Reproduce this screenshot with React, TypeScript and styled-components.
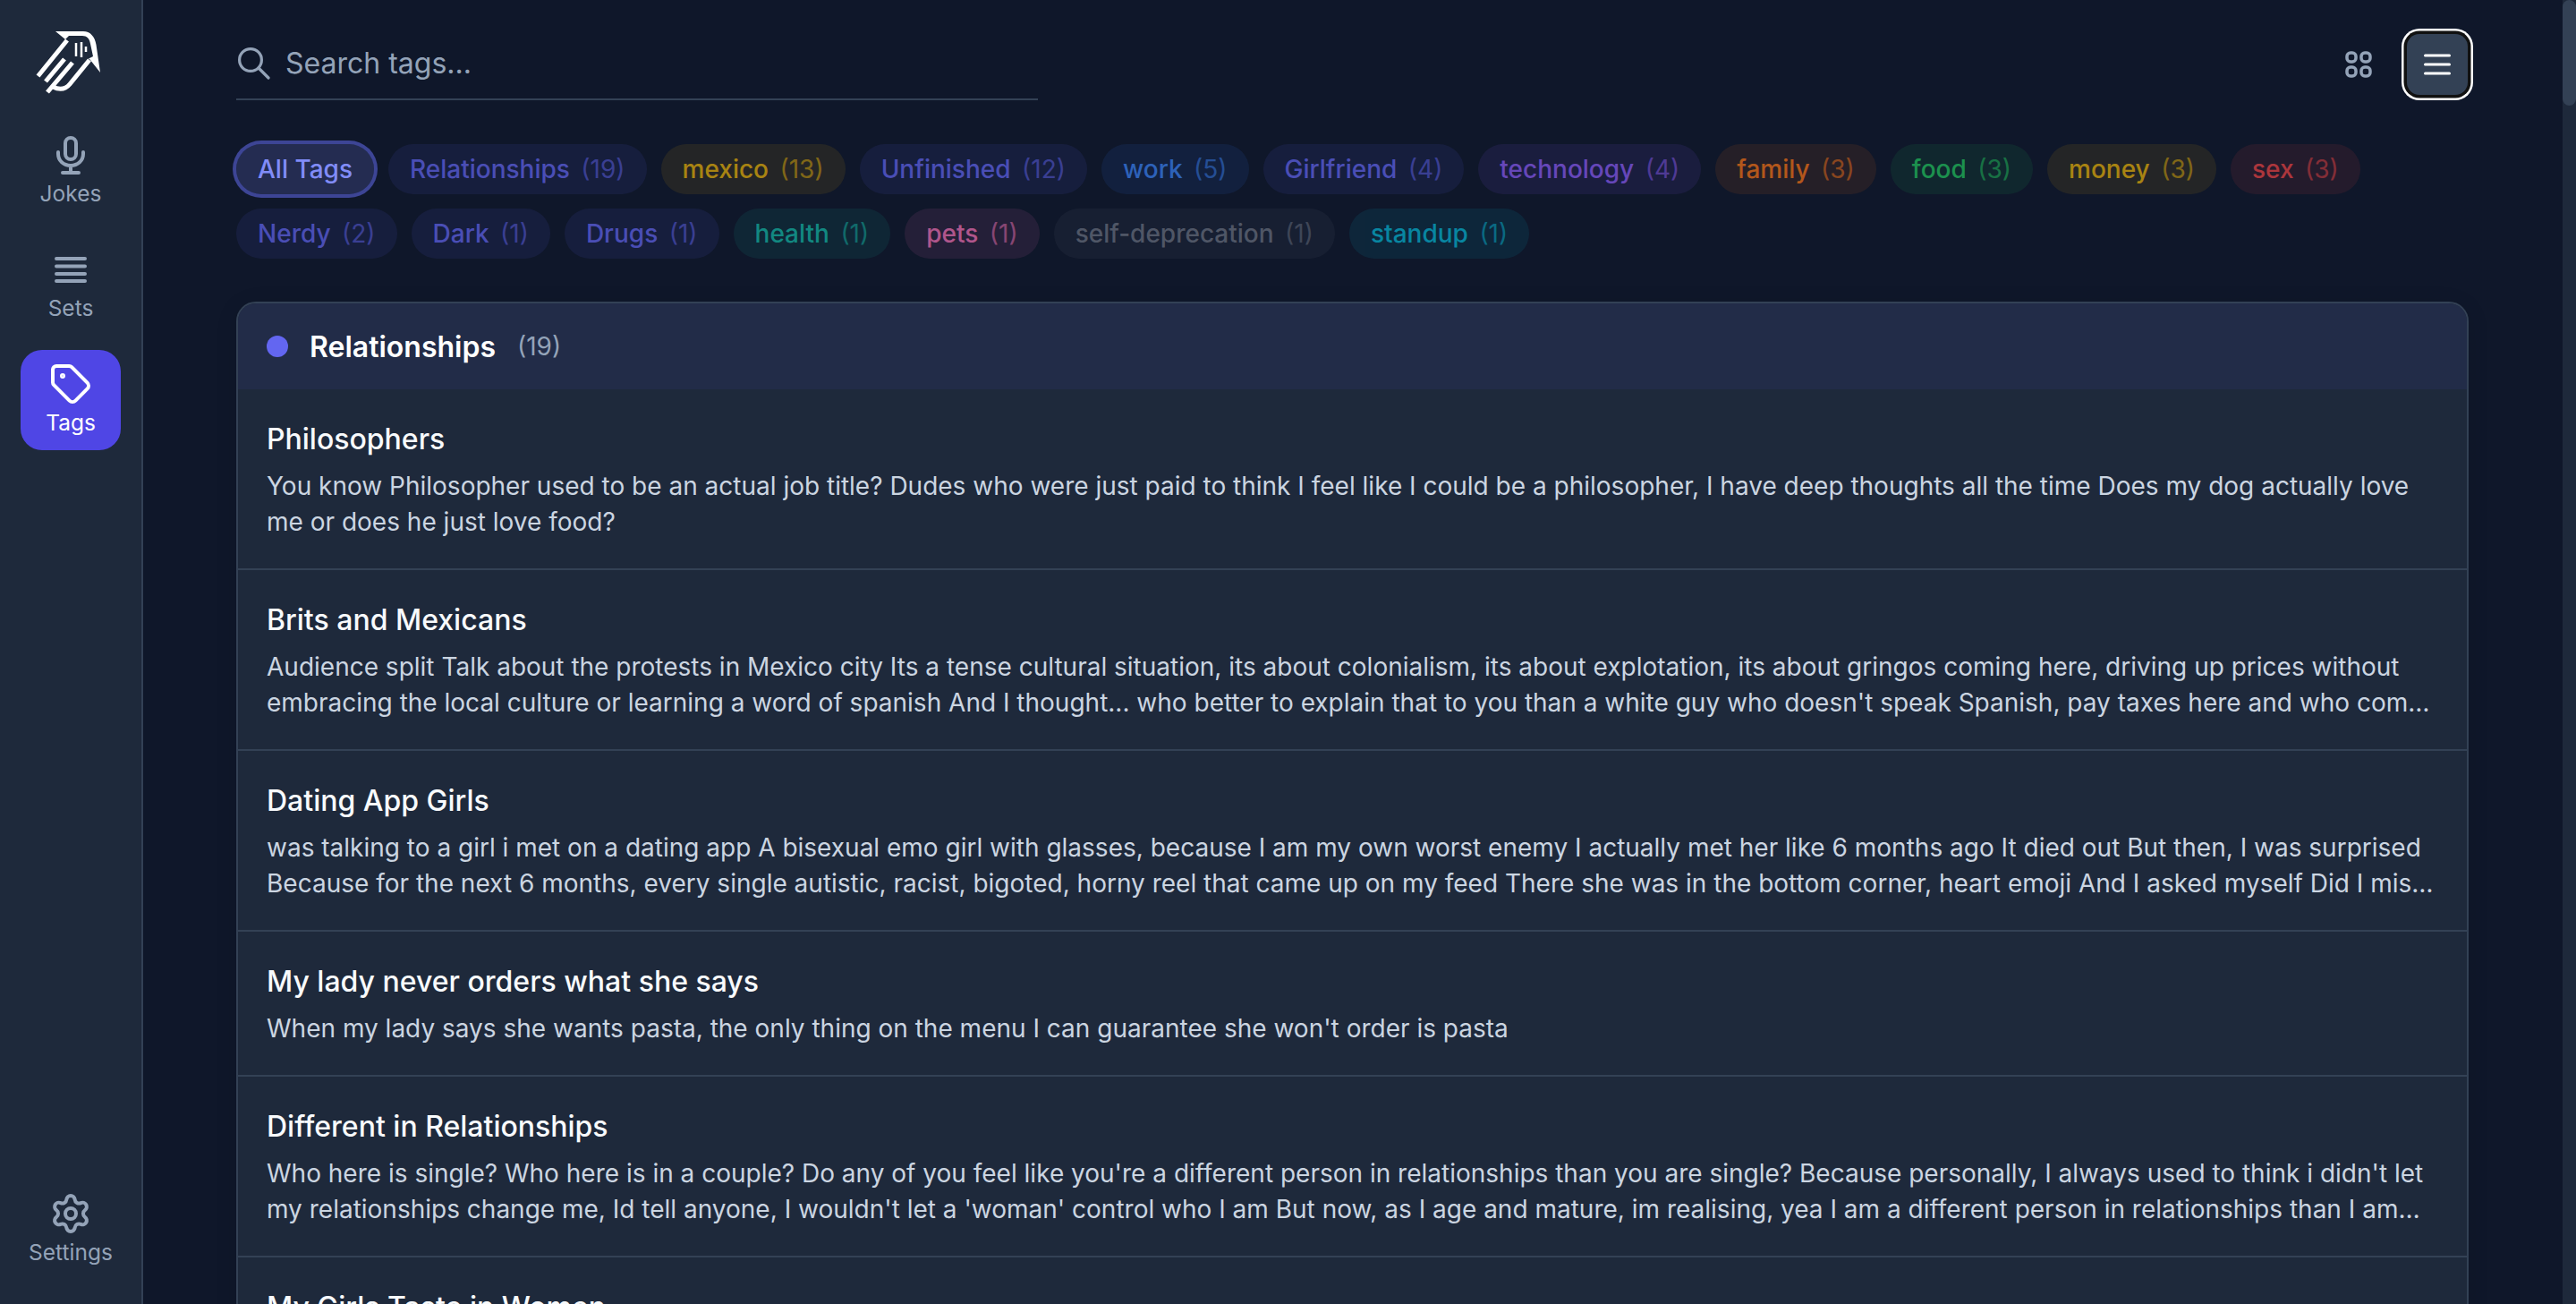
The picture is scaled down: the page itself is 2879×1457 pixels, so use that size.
import styled, { createGlobalStyle } from "styled-components";
import { Settings, Tag } from "lucide-react";

const GlobalStyle = createGlobalStyle`
  * {
    box-sizing: border-box;
  }
  html,
  body {
    margin: 0;
    height: 100%;
    overflow: hidden;
    background: #0f172a;
    font-family: "Inter", "Liberation Sans", sans-serif;
  }
`;

const Shell = styled.div`
  display: flex;
  height: 100vh;
  overflow: hidden;
`;

const Sidebar = styled.aside`
  flex: 0 0 160px;
  display: flex;
  flex-direction: column;
  align-items: center;
  padding: 33px 0 27px;
  background: #1e293b;
  border-right: 2px solid #334155;
`;

const LogoWrap = styled.div`
  width: 80px;
  height: 80px;
  margin-bottom: 22px;
`;

const NavList = styled.nav`
  display: flex;
  flex-direction: column;
  gap: 16px;
  flex: 1;
`;

const NavItem = styled.div<{ $active?: boolean }>`
  width: 112px;
  height: 112px;
  padding-top: 16px;
  display: flex;
  flex-direction: column;
  align-items: center;
  gap: 3px;
  border-radius: 24px;
  background: ${(p) => (p.$active ? "#4f46e5" : "transparent")};
  color: ${(p) => (p.$active ? "#ffffff" : "#94a3b8")};
`;

const NavIcon = styled.div`
  height: 44px;
  display: flex;
  align-items: center;
  justify-content: center;
`;

const NavLabel = styled.span`
  font-size: 24.5px;
  line-height: 36px;
`;

const Main = styled.main`
  flex: 1;
  min-width: 0;
  padding: 32px 105px 0 104px;
  overflow: hidden;
`;

const Toolbar = styled.div`
  display: flex;
  align-items: center;
  justify-content: space-between;
  margin-bottom: 49px;
`;

const SearchBox = styled.div`
  width: 896px;
  height: 80px;
  display: flex;
  align-items: center;
  gap: 17px;
  padding: 7px 0 7px 2px;
  border-bottom: 2px solid #334155;
  color: #94a3b8;
`;

const SearchText = styled.span`
  font-size: 32px;
  line-height: 44px;
`;

const ViewButtons = styled.div`
  display: flex;
  gap: 20px;
  margin-right: 1px;
`;

const ViewButton = styled.div<{ $focused?: boolean }>`
  width: 68px;
  height: 68px;
  display: flex;
  align-items: center;
  justify-content: center;
  border-radius: 14px;
  color: ${(p) => (p.$focused ? "#ffffff" : "#94a3b8")};
  background: ${(p) => (p.$focused ? "#334155" : "transparent")};
  box-shadow: ${(p) =>
    p.$focused ? "0 0 0 3.5px #111111, 0 0 0 6px #ffffff" : "none"};
`;

const ChipWrap = styled.div`
  display: flex;
  flex-wrap: wrap;
  gap: 16px;
  margin-bottom: 48px;
`;

const Chip = styled.div<{ $color: string; $active?: boolean }>`
  height: 56px;
  padding: 0 24px;
  display: flex;
  align-items: center;
  gap: 12.5px;
  border-radius: 28px;
  font-size: 28px;
  font-weight: 500;
  color: ${(p) => p.$color};
  opacity: ${(p) => (p.$active ? 1 : 0.7)};
  background: ${(p) => (p.$active ? `${p.$color}30` : `${p.$color}24`)};
  box-shadow: ${(p) => (p.$active ? "0 0 0 4px #3d4595" : "none")};
`;

const ChipCount = styled.span`
  font-weight: 400;
  opacity: 0.7;
`;

const Card = styled.section`
  border: 2px solid #334155;
  border-radius: 22px;
  background: #1e293b;
  overflow: hidden;
  box-shadow: 0 4px 24px rgba(0, 0, 0, 0.1);
`;

const CardHeader = styled.header`
  height: 96px;
  padding: 0 32px;
  display: flex;
  align-items: center;
  background: #222c48;
`;

const Dot = styled.span`
  width: 24px;
  height: 24px;
  border-radius: 50%;
  background: #6366f1;
  margin-right: 24px;
`;

const CardTitle = styled.h2`
  margin: 0 24px 0 0;
  font-size: 32px;
  font-weight: 600;
  color: #ffffff;
`;

const CardCount = styled.span`
  font-size: 28px;
  color: #94a3b8;
`;

const Row = styled.article`
  padding: 33px 32px 32px;
  border-bottom: 2px solid #334155;
`;

const RowTitle = styled.h3`
  margin: 0 0 9px;
  font-size: 32px;
  line-height: 46px;
  font-weight: 500;
  color: #f8fafc;
`;

const RowBody = styled.p`
  margin: 0;
  font-size: 28px;
  line-height: 40px;
  color: #cbd5e1;
  display: -webkit-box;
  -webkit-line-clamp: 2;
  -webkit-box-orient: vertical;
  overflow: hidden;
`;

const ScrollTrack = styled.div`
  flex: 0 0 15px;
  background: #1e293b;
`;

const ScrollThumb = styled.div`
  height: 118px;
  border-radius: 8px;
  background: #334155;
`;

const Logo = () => (
  <svg width="80" height="80" viewBox="40 33 80 80" fill="none">
    <path
      d="M63 35H94C102 35 107 41 108.500 50L113 81L101.500 66.500L100 65.500L105 63L102 49C101 43 98 40 93 40H78L74 44Z"
      fill="#fff"
    />
    <path
      d="M43.500 85L76 45M52 91L73 66M54 103L82 70M101 67L79 94C74 100 68 101 60 97"
      stroke="#fff"
      strokeWidth="5"
    />
    <path d="M86 48V63M92 47V64M97 52V58" stroke="#fff" strokeWidth="2.500" />
  </svg>
);

const MicIcon = () => (
  <svg width="34" height="44" viewBox="0 0 34 44" fill="none" stroke="#94a3b8" strokeWidth="4" strokeLinecap="round">
    <rect x="11" y="3" width="12" height="24" rx="6" />
    <path d="M3 19V21C3 28.500 9 34 17 34C25 34 31 28.500 31 21V19M17 34V42M8 42H26" />
  </svg>
);

const SetsIcon = () => (
  <svg width="36" height="30" viewBox="0 0 36 30" stroke="#94a3b8" strokeWidth="4" strokeLinecap="round">
    <path d="M2 3H34M2 11.500H34M2 20H34M2 28H34" />
  </svg>
);

const SearchIcon = () => (
  <svg width="36" height="36" viewBox="0 0 36 36" fill="none" stroke="#94a3b8" strokeWidth="3.200" strokeLinecap="round">
    <circle cx="14" cy="14" r="12.400" />
    <path d="M23 23L34 34" />
  </svg>
);

const GridIcon = () => (
  <svg width="30" height="30" viewBox="0 0 30 30" fill="none" stroke="#94a3b8" strokeWidth="3.500">
    <rect x="2" y="2" width="10" height="10" rx="4" />
    <rect x="18" y="2" width="10" height="10" rx="4" />
    <rect x="2" y="18" width="10" height="10" rx="4" />
    <rect x="18" y="18" width="10" height="10" rx="4" />
  </svg>
);

const MenuIcon = () => (
  <svg width="30" height="24" viewBox="0 0 30 24" stroke="#fff" strokeWidth="3" strokeLinecap="round">
    <path d="M1.500 2H28.500M1.500 12H28.500M1.500 22H28.500" />
  </svg>
);

const tags = [
  { name: "Relationships", count: 19, color: "#6366f1" },
  { name: "mexico", count: 13, color: "#eab308" },
  { name: "Unfinished", count: 12, color: "#6366f1" },
  { name: "work", count: 5, color: "#3b82f6" },
  { name: "Girlfriend", count: 4, color: "#6366f1" },
  { name: "technology", count: 4, color: "#8b5cf6" },
  { name: "family", count: 3, color: "#f97316" },
  { name: "food", count: 3, color: "#22c55e" },
  { name: "money", count: 3, color: "#eab308" },
  { name: "sex", count: 3, color: "#ef4444" },
  { name: "Nerdy", count: 2, color: "#6366f1" },
  { name: "Dark", count: 1, color: "#6366f1" },
  { name: "Drugs", count: 1, color: "#6366f1" },
  { name: "health", count: 1, color: "#14b8a6" },
  { name: "pets", count: 1, color: "#f472b6" },
  { name: "self-deprecation", count: 1, color: "#6b7280" },
  { name: "standup", count: 1, color: "#06b6d4" },
];

const jokes = [
  {
    title: "Philosophers",
    body: "You know Philosopher used to be an actual job title? Dudes who were just paid to think I feel like I could be a philosopher, I have deep thoughts all the time Does my dog actually love me or does he just love food?",
  },
  {
    title: "Brits and Mexicans",
    body: "Audience split Talk about the protests in Mexico city Its a tense cultural situation, its about colonialism, its about explotation, its about gringos coming here, driving up prices without embracing the local culture or learning a word of spanish And I thought... who better to explain that to you than a white guy who doesn't speak Spanish, pay taxes here and who comes here to live and work every single day",
  },
  {
    title: "Dating App Girls",
    body: "was talking to a girl i met on a dating app A bisexual emo girl with glasses, because I am my own worst enemy I actually met her like 6 months ago It died out But then, I was surprised Because for the next 6 months, every single autistic, racist, bigoted, horny reel that came up on my feed There she was in the bottom corner, heart emoji And I asked myself Did I miss her or what was it",
  },
  {
    title: "My lady never orders what she says",
    body: "When my lady says she wants pasta, the only thing on the menu I can guarantee she won't order is pasta",
  },
  {
    title: "Different in Relationships",
    body: "Who here is single? Who here is in a couple? Do any of you feel like you're a different person in relationships than you are single? Because personally, I always used to think i didn't let my relationships change me, Id tell anyone, I wouldn't let a 'woman' control who I am But now, as I age and mature, im realising, yea I am a different person in relationships than I am when single",
  },
  { title: "My Girls Taste in Women", body: "" },
];

const App = () => {
  return (
    <Shell>
      <GlobalStyle />
      <Sidebar>
        <LogoWrap>
          <Logo />
        </LogoWrap>
        <NavList>
          <NavItem>
            <NavIcon>
              <MicIcon />
            </NavIcon>
            <NavLabel>Jokes</NavLabel>
          </NavItem>
          <NavItem>
            <NavIcon>
              <SetsIcon />
            </NavIcon>
            <NavLabel>Sets</NavLabel>
          </NavItem>
          <NavItem $active>
            <NavIcon>
              <Tag size={48} strokeWidth={2} />
            </NavIcon>
            <NavLabel>Tags</NavLabel>
          </NavItem>
        </NavList>
        <NavItem>
          <NavIcon>
            <Settings size={48} strokeWidth={2} />
          </NavIcon>
          <NavLabel>Settings</NavLabel>
        </NavItem>
      </Sidebar>
      <Main>
        <Toolbar>
          <SearchBox>
            <SearchIcon />
            <SearchText>Search tags...</SearchText>
          </SearchBox>
          <ViewButtons>
            <ViewButton>
              <GridIcon />
            </ViewButton>
            <ViewButton $focused>
              <MenuIcon />
            </ViewButton>
          </ViewButtons>
        </Toolbar>
        <ChipWrap>
          <Chip $color="#818cf8" $active>
            All Tags
          </Chip>
          {tags.map((t) => (
            <Chip key={t.name} $color={t.color}>
              {t.name}
              <ChipCount>({t.count})</ChipCount>
            </Chip>
          ))}
        </ChipWrap>
        <Card>
          <CardHeader>
            <Dot />
            <CardTitle>Relationships</CardTitle>
            <CardCount>(19)</CardCount>
          </CardHeader>
          {jokes.map((j) => (
            <Row key={j.title}>
              <RowTitle>{j.title}</RowTitle>
              <RowBody>{j.body}</RowBody>
            </Row>
          ))}
        </Card>
      </Main>
      <ScrollTrack>
        <ScrollThumb />
      </ScrollTrack>
    </Shell>
  );
};

export default App;
